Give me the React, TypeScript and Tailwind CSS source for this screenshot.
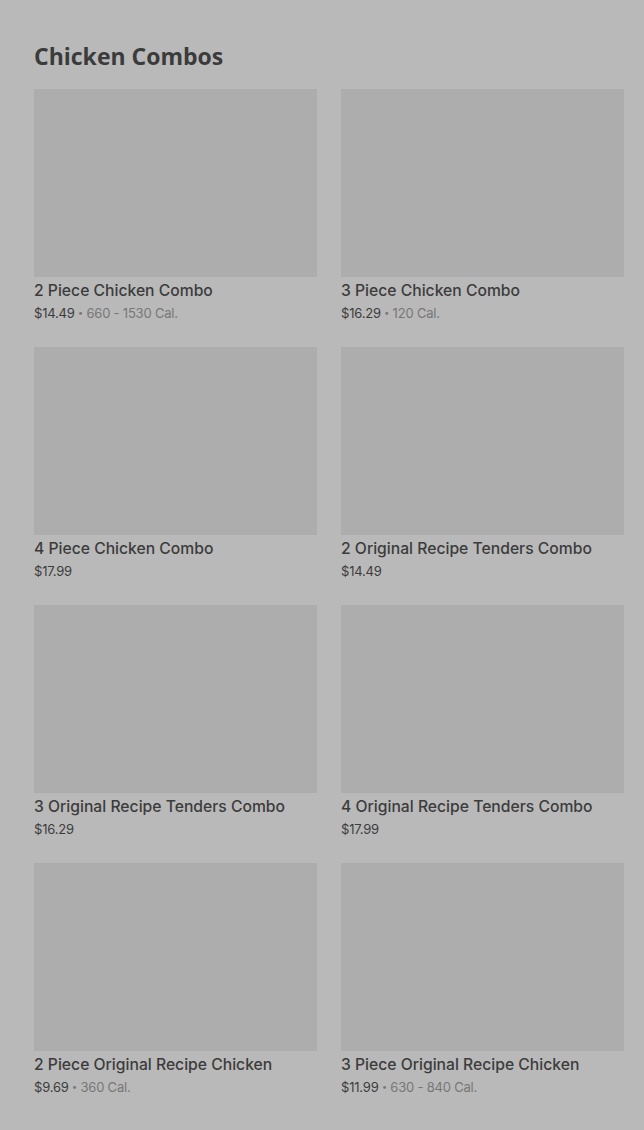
const items = [
  { name: "2 Piece Chicken Combo", price: "$14.49", cal: "660 - 1530 Cal." },
  { name: "3 Piece Chicken Combo", price: "$16.29", cal: "120 Cal." },
  { name: "4 Piece Chicken Combo", price: "$17.99" },
  { name: "2 Original Recipe Tenders Combo", price: "$14.49" },
  { name: "3 Original Recipe Tenders Combo", price: "$16.29" },
  { name: "4 Original Recipe Tenders Combo", price: "$17.99" },
  { name: "2 Piece Original Recipe Chicken", price: "$9.69", cal: "360 Cal." },
  { name: "3 Piece Original Recipe Chicken", price: "$11.99", cal: "630 - 840 Cal." },
];

const App = () => {
  return (
    <div className="min-h-[1130px] w-full bg-[#b9b9b9] pl-[34px] pr-[20px] pt-[41px]">
      <h2 className="text-[23px] font-bold leading-[30px] text-[#3b3b3b] tracking-[0px] [font-family:'Open_Sans',Lato,sans-serif]">
        Chicken Combos
      </h2>
      <div className="mt-[18px] grid grid-cols-2 gap-x-[24px] gap-y-0">
        {items.map((item) => (
          <div key={item.name} className="h-[258px]">
            <div className="h-[188px] w-full bg-[#adadad]" />
            <div className="mt-[4px] text-[15.7px] font-medium leading-[20px] text-[#3c3c3c] [font-family:Inter,Roboto,sans-serif]">
              {item.name}
            </div>
            <div className="mt-[3px] text-[13px] leading-[18px] tracking-[-0.2px] text-[#3c3c3c] [font-family:Inter,Roboto,sans-serif]">
              {item.price}
              {item.cal && (
                <span className="text-[#777777]">
                  {" "}
                  <span className="relative top-[-2px] text-[9px]">•</span> {item.cal}
                </span>
              )}
            </div>
          </div>
        ))}
      </div>
    </div>
  );
};

export default App;
